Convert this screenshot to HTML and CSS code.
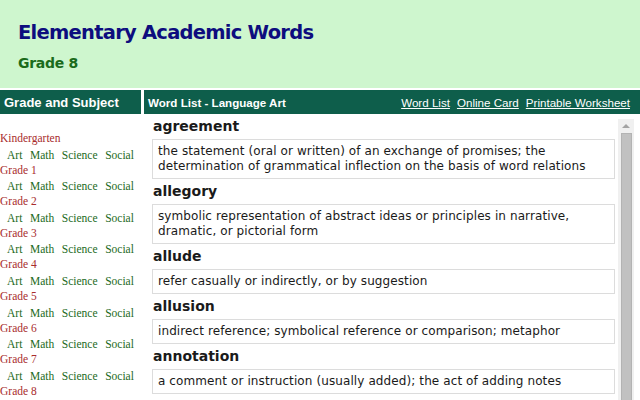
FILE: index.html
```html
<!DOCTYPE html>
<html>
<head>
<meta charset="utf-8">
<link rel="stylesheet" href="styles.css">
</head>
<body>
<header class="header">
  <h1 class="title">Elementary Academic Words</h1>
  <h2 class="grade">Grade 8</h2>
</header>
<main class="main">
  <div class="bar bar-left">Grade and Subject</div>
  <div class="bar bar-right">
    <span class="bar-title">Word List - Language Art</span>
    <nav class="links">
      <a href="#" class="link">Word List</a>
      <a href="#" class="link">Online Card</a>
      <a href="#" class="link">Printable Worksheet</a>
    </nav>
  </div>
  <aside class="side">
    <div class="g">Kindergarten</div>
    <div class="subj"><a href="#">Art</a><a href="#">Math</a><a href="#">Science</a><a href="#">Social</a></div>
    <div class="g">Grade 1</div>
    <div class="subj"><a href="#">Art</a><a href="#">Math</a><a href="#">Science</a><a href="#">Social</a></div>
    <div class="g">Grade 2</div>
    <div class="subj"><a href="#">Art</a><a href="#">Math</a><a href="#">Science</a><a href="#">Social</a></div>
    <div class="g">Grade 3</div>
    <div class="subj"><a href="#">Art</a><a href="#">Math</a><a href="#">Science</a><a href="#">Social</a></div>
    <div class="g">Grade 4</div>
    <div class="subj"><a href="#">Art</a><a href="#">Math</a><a href="#">Science</a><a href="#">Social</a></div>
    <div class="g">Grade 5</div>
    <div class="subj"><a href="#">Art</a><a href="#">Math</a><a href="#">Science</a><a href="#">Social</a></div>
    <div class="g">Grade 6</div>
    <div class="subj"><a href="#">Art</a><a href="#">Math</a><a href="#">Science</a><a href="#">Social</a></div>
    <div class="g">Grade 7</div>
    <div class="subj"><a href="#">Art</a><a href="#">Math</a><a href="#">Science</a><a href="#">Social</a></div>
    <div class="g">Grade 8</div>
  </aside>
  <section class="content">
    <div class="words">
      <h3 class="word">agreement</h3>
      <div class="def">the statement (oral or written) of an exchange of promises; the determination of grammatical inflection on the basis of word relations</div>
      <h3 class="word">allegory</h3>
      <div class="def">symbolic representation of abstract ideas or principles in narrative, dramatic, or pictorial form</div>
      <h3 class="word">allude</h3>
      <div class="def">refer casually or indirectly, or by suggestion</div>
      <h3 class="word">allusion</h3>
      <div class="def">indirect reference; symbolical reference or comparison; metaphor</div>
      <h3 class="word">annotation</h3>
      <div class="def">a comment or instruction (usually added); the act of adding notes</div>
    </div>
    <div class="scrollbar">
      <div class="arrow"><span class="tri"></span></div>
      <div class="thumb"></div>
    </div>
  </section>
</main>
</body>
</html>
```

FILE: styles.css
```css
html, body {
  margin: 0;
  padding: 0;
}
body {
  width: 640px;
  height: 400px;
  overflow: hidden;
  background: #ffffff;
  font-family: "DejaVu Sans", Verdana, sans-serif;
}
.header {
  height: 88px;
  background: #cef6ce;
  padding-left: 18px;
  box-sizing: border-box;
}
.title {
  margin: 0;
  padding-top: 21px;
  font-size: 19.5px;
  line-height: 24px;
  letter-spacing: -0.75px;
  font-weight: bold;
  color: #0d0d7e;
}
.grade {
  margin: 9px 0 0 0;
  font-size: 14px;
  line-height: 18px;
  letter-spacing: -0.3px;
  font-weight: bold;
  color: #1b6b1b;
}
.main {
  margin-top: 2px;
  display: grid;
  grid-template-columns: 141px 1fr;
  grid-template-rows: 24px 286px;
  column-gap: 3px;
}
.bar {
  background: #0e5e4b;
  color: #ffffff;
  font-family: "Liberation Sans", Arial, sans-serif;
  display: flex;
  align-items: center;
}
.bar-left {
  padding-left: 4px;
  font-size: 13px;
  font-weight: bold;
}
.bar-right {
  justify-content: space-between;
  padding: 0 10px 0 4px;
  font-size: 11.6px;
}
.bar-title {
  font-weight: bold;
}
.links {
  display: flex;
  gap: 7px;
}
.link {
  color: #ffffff;
  text-decoration: underline;
}
.side {
  padding-top: 17px;
  font-family: "Liberation Serif", "Times New Roman", serif;
  font-size: 11.5px;
  line-height: 15px;
}
.g {
  color: #a82c2c;
}
.subj {
  display: flex;
  gap: 7.6px;
  padding-left: 7px;
  margin-top: 1.6px;
}
.subj a {
  color: #1c6a1c;
  text-decoration: none;
}
.content {
  display: flex;
  overflow: hidden;
}
.words {
  flex: 1;
  padding: 0 3px 0 8px;
}
.word {
  margin: 0;
  padding: 3px 0 3px 1px;
  font-size: 14px;
  line-height: 19px;
  font-weight: bold;
  color: #1a1a1a;
}
.def {
  border: 1px solid #dcdcdc;
  padding: 4px 5px;
  font-size: 12px;
  line-height: 15px;
  letter-spacing: 0.1px;
  color: #1a1a1a;
}
.scrollbar {
  width: 16px;
  margin: 5px 6px 0 0;
  background: #f0f0f0;
  display: flex;
  flex-direction: column;
}
.arrow {
  height: 14px;
  display: flex;
  align-items: center;
  justify-content: center;
}
.tri {
  width: 0;
  height: 0;
  border-left: 4px solid transparent;
  border-right: 4px solid transparent;
  border-bottom: 4px solid #a3a3a3;
}
.thumb {
  flex: 1;
  margin: 0 2px 0 3px;
  background: #c1c1c1;
  border: 1px solid #b3b3b3;
  border-bottom: none;
}
```
